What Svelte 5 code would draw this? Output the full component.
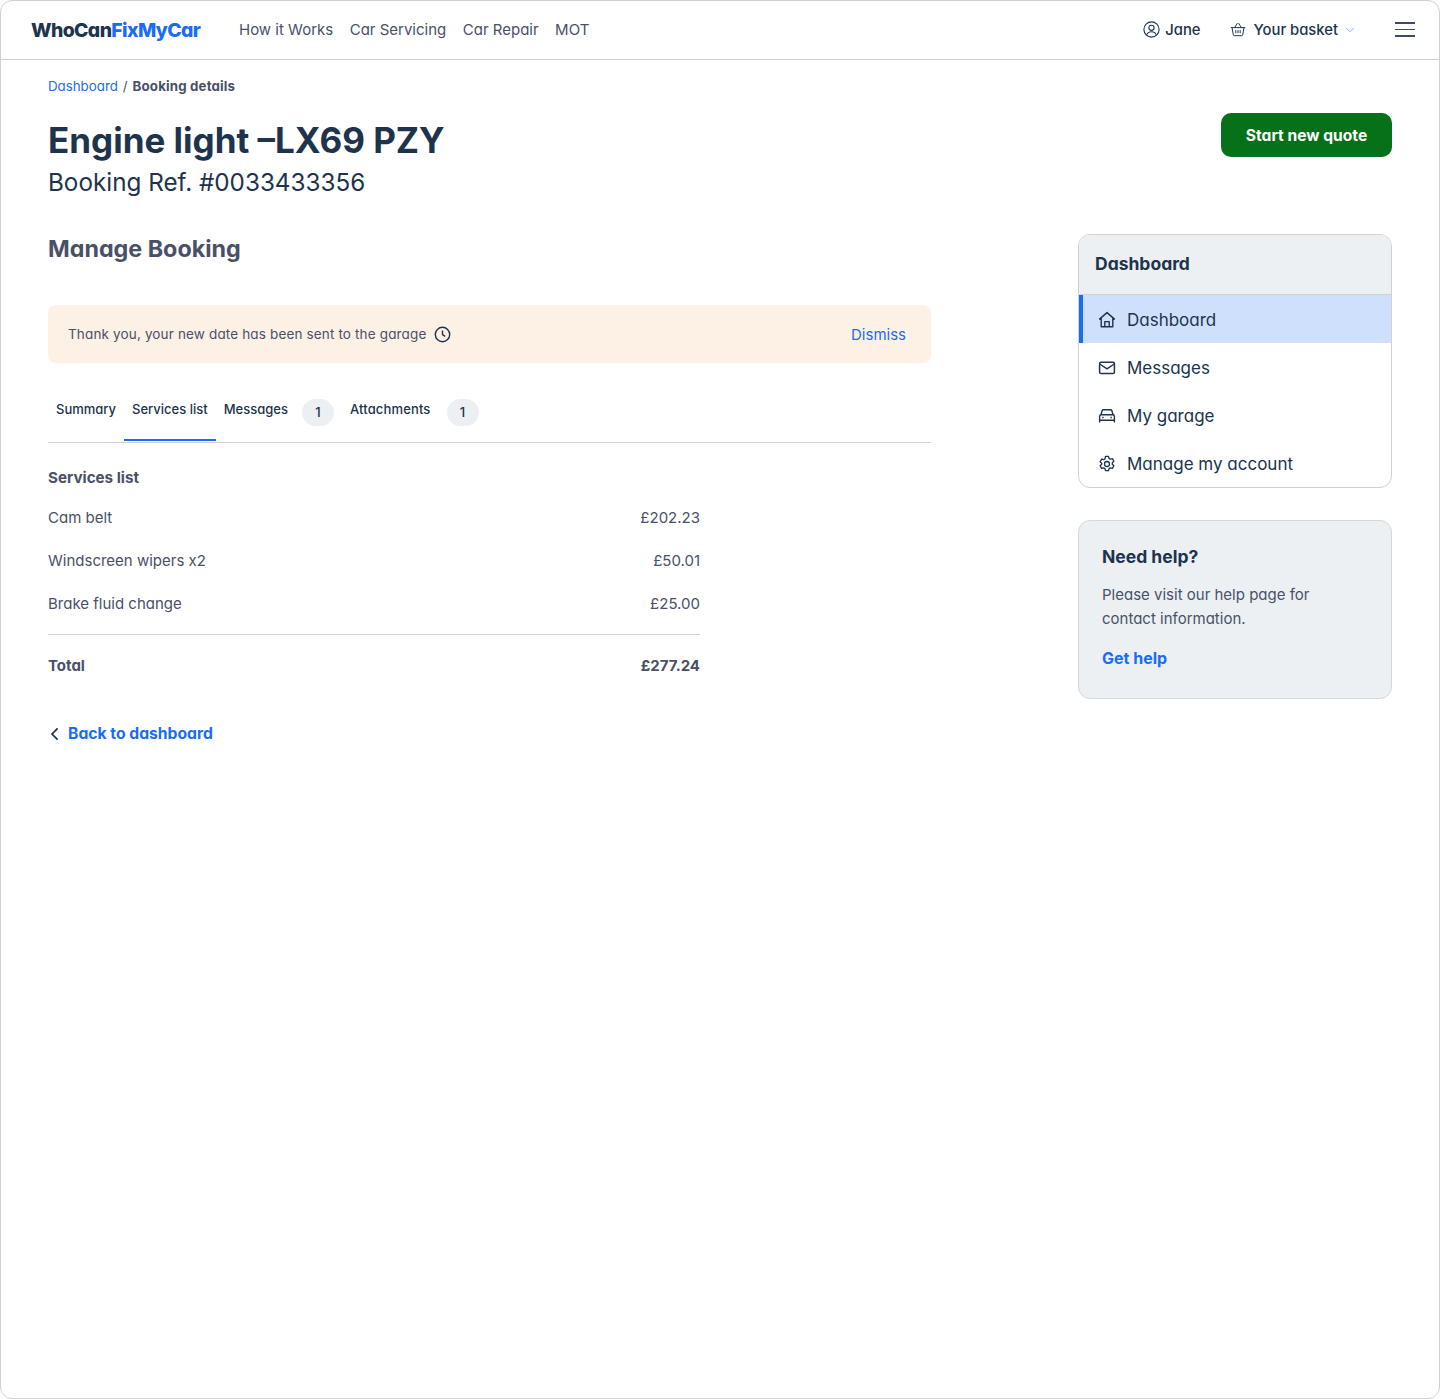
<script>
    let services = [
        { name: 'Cam belt', price: '£202.23' },
        { name: 'Windscreen wipers x2', price: '£50.01' },
        { name: 'Brake fluid change', price: '£25.00' }
    ];
</script>

<div class="frame">
    <header class="topbar">
        <div class="logo">WhoCan<span>FixMyCar</span></div>
        <nav class="mainnav">
            <a href="#a">How it Works</a>
            <a href="#a">Car Servicing</a>
            <a href="#a">Car Repair</a>
            <a href="#a">MOT</a>
        </nav>
        <div class="account">
            <span class="acc-item jane">
                <svg width="17" height="17" viewBox="0 0 17 17" fill="none" stroke="#20334d" stroke-width="1.1"><circle cx="8.5" cy="8.5" r="7.6"/><circle cx="8.5" cy="6.8" r="2.6"/><path d="M3.6 14.2c.7-2.4 2.6-3.5 4.9-3.5s4.2 1.1 4.9 3.5"/></svg>
                Jane
            </span>
            <span class="acc-item basket">
                <svg width="16" height="15" viewBox="0 0 16 15" fill="none" stroke="#20334d" stroke-width="1"><path d="M.8 5.6h14.4M2 5.6l1.3 7.2c.1.6.5.9 1 .9h7.4c.5 0 .9-.3 1-.9L14 5.6M4.6 5.6 7.4 1.2M11.4 5.6 8.6 1.2M5.8 8.2v3M8 8.2v3M10.2 8.2v3"/></svg>
                Your basket
                <svg class="chev" width="10" height="6" viewBox="0 0 10 6" fill="none" stroke="#8db4f5" stroke-width="1"><path d="M1 1l4 3.6L9 1"/></svg>
            </span>
            <span class="burger"><i></i><i></i><i></i></span>
        </div>
    </header>

    <main class="page">
        <div class="crumbs"><a href="#a">Dashboard</a><span class="sep">/</span><b>Booking details</b></div>
        <div class="title-row">
            <div class="titles">
                <h1>Engine light –LX69 PZY</h1>
                <p class="ref">Booking Ref. #0033433356</p>
            </div>
            <button class="quote">Start new quote</button>
        </div>

        <div class="cols">
            <section class="content">
                <h2>Manage Booking</h2>
                <div class="alert">
                    <span class="alert-msg">Thank you, your new date has been sent to the garage
                        <svg width="17" height="17" viewBox="0 0 17 17" fill="none" stroke="#20334d" stroke-width="1.4"><circle cx="8.5" cy="8.5" r="7.2"/><path d="M8.5 4.4v4.3l2.7 1.6"/></svg>
                    </span>
                    <a href="#a">Dismiss</a>
                </div>

                <div class="tabs">
                    <span class="tab">Summary</span>
                    <span class="tab active">Services list</span>
                    <span class="tab msgs">Messages</span>
                    <span class="count">1</span>
                    <span class="tab att">Attachments</span>
                    <span class="count">1</span>
                </div>

                <div class="services">
                    <h3>Services list</h3>
                    {#each services as s}
                        <div class="line"><span>{s.name}</span><span>{s.price}</span></div>
                    {/each}
                    <div class="total"><span>Total</span><span>£277.24</span></div>
                </div>

                <a class="back" href="#a">
                    <svg width="10" height="14" viewBox="0 0 10 14" fill="none" stroke="#20334d" stroke-width="1.7"><path d="M7.6 1.4 2 7l5.6 5.6"/></svg>
                    Back to dashboard
                </a>
            </section>

            <aside class="side">
                <div class="menu">
                    <div class="menu-head">Dashboard</div>
                    <a class="menu-item current" href="#a">
                        <svg width="18" height="18" viewBox="0 0 18 18" fill="none" stroke="#20334d" stroke-width="1.4" stroke-linejoin="round"><path d="M1.2 8.4 9 1.6l7.8 6.8M3.2 6.8v9h11.6v-9M6.8 15.8v-5.2h4.4v5.2"/></svg>
                        Dashboard
                    </a>
                    <a class="menu-item" href="#a">
                        <svg width="18" height="18" viewBox="0 0 18 18" fill="none" stroke="#20334d" stroke-width="1.5" stroke-linejoin="round"><rect x="1.6" y="3.2" width="14.8" height="11.4" rx="1.4"/><path d="M1.8 5l7.2 4.8L16.2 5"/></svg>
                        Messages
                    </a>
                    <a class="menu-item" href="#a">
                        <svg width="18" height="18" viewBox="0 0 18 18" fill="none" stroke="#20334d" stroke-width="1.4" stroke-linejoin="round"><path d="M1.6 15.4V9.4c0-.9.7-1.6 1.6-1.6h11.6c.9 0 1.6.7 1.6 1.6v6M1.6 13.2h14.8M3 7.8l1.1-4c.2-.6.7-1 1.3-1h7.2c.6 0 1.1.4 1.3 1l1.1 4"/><path d="M4.2 10.5h1.4M12.4 10.5h1.4"/></svg>
                        My garage
                    </a>
                    <a class="menu-item" href="#a">
                        <svg width="18" height="18" viewBox="0 0 18 18" fill="none" stroke="#20334d" stroke-width="1.3" stroke-linejoin="round"><circle cx="9" cy="9" r="2.5"/><path d="M7.5 1.3h3l.5 2.1 1.3.8 2.1-.6 1.5 2.6-1.6 1.5v1.6l1.6 1.5-1.5 2.6-2.1-.6-1.3.8-.5 2.1h-3l-.5-2.1-1.3-.8-2.1.6-1.5-2.6 1.6-1.5V8.2L2.1 6.7l1.5-2.6 2.1.6 1.3-.8z"/></svg>
                        Manage my account
                    </a>
                </div>

                <div class="help">
                    <h4>Need help?</h4>
                    <p>Please visit our help page for contact information.</p>
                    <a href="#a">Get help</a>
                </div>
            </aside>
        </div>
    </main>
</div>

<style>
    :global(body) { margin: 0; background: #fff; }
    .frame {
        box-sizing: border-box;
        height: 1399px;
        border: 1px solid #cfd1d3;
        border-radius: 12px;
        font-family: "Inter", "Liberation Sans", sans-serif;
        font-feature-settings: "cv11" 1;
        color: #20334d;
        overflow: hidden;
    }
    a { text-decoration: none; color: #1a6cf5; }

    .topbar { height: 57px; border-bottom: 1px solid #cfd1d3; display: flex; align-items: center; padding: 0 24px 1px 30px; }
    .logo { font-size: 19.4px; font-weight: 800; letter-spacing: -0.6px; width: 208px; }
    .logo span { color: #1a6cf5; }
    .mainnav { display: flex; gap: 16.5px; font-size: 15px; }
    .mainnav a { color: #4a5068; }
    .account { margin-left: auto; display: flex; align-items: center; font-size: 14.8px; font-weight: 500; }
    .acc-item { display: flex; align-items: center; gap: 5px; }
    .jane { margin-right: 29px; }
    .basket { gap: 8px; margin-right: 40px; }
    .chev { margin-left: -1px; }
    .burger { display: flex; flex-direction: column; gap: 5px; width: 20px; }
    .burger i { height: 1.5px; background: #3d4a63; }

    .page { padding: 0 47px; }
    .crumbs { padding-top: 17px; font-size: 13.3px; line-height: 18px; display: flex; color: #4a5068; }
    .sep { margin: 0 5px; }
    .crumbs b { font-weight: 700; letter-spacing: 0.15px; }
    .title-row { display: flex; justify-content: space-between; align-items: flex-start; margin-top: 18px; }
    .titles { padding-top: 4px; }
    h1 { margin: 0; font-size: 35px; line-height: 46px; font-weight: 700; }
    .ref { margin: 0; font-size: 24.25px; line-height: 39px; font-weight: 400; }
    .quote { width: 171px; height: 44px; background: #067119; color: #fff; border: 0; border-radius: 10px; font: 700 15.6px "Inter", sans-serif; font-feature-settings: "cv11" 1; }

    .cols { display: flex; justify-content: space-between; margin-top: 32px; }
    .content { width: 883px; }
    h2 { margin: 0; font-size: 23.3px; line-height: 30px; font-weight: 700; color: #4a5068; }
    .alert { margin-top: 41px; height: 58px; box-sizing: border-box; background: #fdf1e6; border-radius: 8px; display: flex; align-items: center; justify-content: space-between; padding: 0 25px 0 20px; font-size: 13.5px; letter-spacing: 0.15px; color: #4a5068; }
    .alert-msg { display: flex; align-items: center; gap: 8px; }
    .alert a { font-size: 15px; letter-spacing: 0; }

    .tabs { display: flex; margin-top: 24px; height: 55px; border-bottom: 1px solid #cfd1d3; align-items: flex-start; }
    .tab { height: 54px; box-sizing: border-box; padding: 13px 8px 0; font-size: 13px; line-height: 18px; font-weight: 500; }
    .tab.active { border-bottom: 2px solid #1a6cf5; }
    .tab.msgs { padding-right: 6px; }
    .tab.att { letter-spacing: 0.15px; }
    .count { margin: 12px 8px 0; width: 32px; height: 27px; border-radius: 14px; background: #ecf0f3; font-size: 13px; text-align: center; line-height: 27px; font-weight: 500; }

    .services { width: 652px; color: #4a5068; font-size: 15px; }
    h3 { margin: 0; padding-top: 25px; font-size: 15.2px; line-height: 20px; font-weight: 700; }
    .line { display: flex; justify-content: space-between; height: 43px; align-items: center; }
    .line:nth-of-type(1) { margin-top: 8px; }
    .total { display: flex; justify-content: space-between; margin-top: 9px; border-top: 1px solid #cfd1d3; padding-top: 21px; line-height: 20px; font-weight: 700; }
    .back { margin-top: 48px; display: flex; align-items: center; gap: 8px; font-size: 15.7px; font-weight: 700; line-height: 20px; padding-left: 2px; }

    .side { width: 314px; }
    .menu { border: 1px solid #cfd1d3; border-radius: 12px; overflow: hidden; }
    .menu-head { height: 57px; padding: 0 16px 2px; background: #ecf0f3; border-bottom: 1px solid #cfd1d3; display: flex; align-items: center; font-size: 17.5px; font-weight: 700; }
    .menu-item { height: 48px; box-sizing: border-box; display: flex; align-items: center; gap: 11px; padding: 2px 0 0 19px; font-size: 17px; color: #20334d; }
    .menu-item.current { background: #cfe0fc; border-left: 4px solid #1a6cf5; padding-left: 15px; }
    .help { margin-top: 32px; height: 179px; box-sizing: border-box; padding: 24px 23px; background: #ecf0f3; border: 1px solid #d5d8db; border-radius: 12px; }
    h4 { margin: 0; font-size: 17.5px; line-height: 24px; font-weight: 700; }
    .help p { margin: 14px 0 0; width: 220px; font-size: 15px; line-height: 24px; color: #4a5068; }
    .help a { display: block; margin-top: 15px; font-size: 16px; line-height: 24px; font-weight: 700; }
</style>
